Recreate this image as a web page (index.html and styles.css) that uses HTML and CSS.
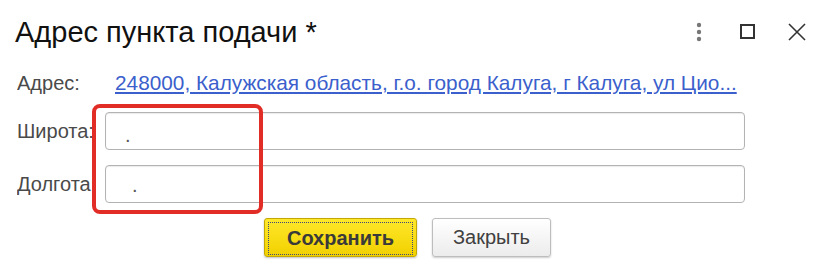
FILE: index.html
```html
<!DOCTYPE html>
<html lang="ru">
<head>
    <meta charset="UTF-8">
    <title>Адрес пункта подачи</title>
    <link rel="stylesheet" href="styles.css">
</head>
<body>

    <div class="dialog">
        <div class="header">
            <h1 class="title">Адрес пункта подачи *</h1>
            <div class="tools">
                <span class="tool more">
                    <svg width="6" height="20" viewBox="0 0 6 20"><circle cx="3" cy="3" r="2.2" fill="#777"/><circle cx="3" cy="10" r="2.2" fill="#777"/><circle cx="3" cy="17" r="2.2" fill="#777"/></svg>
                </span>
                <span class="tool maximize">
                    <svg width="16" height="16" viewBox="0 0 16 16"><rect x="1" y="1" width="13" height="13" fill="none" stroke="#333" stroke-width="2"/></svg>
                </span>
                <span class="tool close">
                    <svg width="18" height="18" viewBox="0 0 18 18"><path d="M1 1 L17 17 M17 1 L1 17" stroke="#333" stroke-width="1.6" fill="none"/></svg>
                </span>
            </div>
        </div>

        <div class="form">
            <div class="row address-row">
                <span class="label">Адрес:</span>
                <a class="address-link" href="#">248000, Калужская область, г.о. город Калуга, г Калуга, ул Цио...</a>
            </div>
            <div class="row">
                <span class="label">Широта:</span>
                <div class="field"><span class="mask">.</span></div>
            </div>
            <div class="row">
                <span class="label">Долгота:</span>
                <div class="field"><span class="mask second">.</span></div>
            </div>

            <!-- пометка на скриншоте -->
            <div class="highlight"></div>
        </div>

        <div class="buttons">
            <button class="btn btn-save"><span>Сохранить</span></button>
            <button class="btn btn-close">Закрыть</button>
        </div>
    </div>

</body>
</html>
```

FILE: styles.css
```css
body {
    margin: 0;
    background-color: #fff;
    font-family: "Liberation Sans", Arial, sans-serif;
}

.dialog {
    width: 825px;
    height: 277px;
    overflow: hidden;
}

.header {
    display: flex;
    align-items: center;
    justify-content: space-between;
    height: 48px;
    padding-top: 8px;
}

.title {
    margin: 0 0 0 15px;
    font-size: 29px;
    font-weight: normal;
    color: #111;
}

.tools {
    display: flex;
    align-items: center;
    margin-right: 19px;
}

.tool {
    display: flex;
    align-items: center;
}

.more {
    margin-right: 38px;
}

.maximize {
    margin-right: 32px;
}

.form {
    position: relative;
    padding: 4px 0 0 17px;
}

.row {
    display: flex;
    align-items: center;
}

.label {
    width: 88px;
    flex: none;
    font-size: 20px;
    color: #4a4a4a;
    white-space: nowrap;
    overflow: hidden;
}

.address-row {
    height: 46px;
}

.address-link {
    margin-left: 10px;
    font-size: 20.8px;
    color: #3b5fcc;
    text-decoration: underline;
    white-space: nowrap;
}

.row + .row {
    margin-top: 15px;
}

.address-row + .row {
    margin-top: 6px;
}

.field {
    position: relative;
    width: 638px;
    height: 36px;
    border: 1px solid #b3b3b3;
    border-radius: 4px;
    box-shadow: inset 0 1px 1px rgba(0, 0, 0, 0.08);
    background-color: #fff;
}

.mask {
    position: absolute;
    left: 19px;
    top: 11px;
    font-size: 20px;
    color: #555;
}

.mask.second {
    left: 26px;
    top: 8px;
}

.highlight {
    position: absolute;
    left: 92px;
    top: 48px;
    width: 163px;
    height: 102px;
    border: 4px solid #e22d27;
    border-radius: 8px;
}

.buttons {
    display: flex;
    margin-top: 15px;
    margin-left: 264px;
}

.btn {
    height: 39px;
    font-family: "Liberation Sans", Arial, sans-serif;
    font-size: 20px;
    color: #404040;
    border-radius: 3px;
    cursor: pointer;
}

.btn-save {
    width: 153px;
    padding: 3px;
    border: 1px solid #c4a800;
    background: linear-gradient(#ffe82a, #f1d000);
    box-shadow: 0 1px 2px rgba(0, 0, 0, 0.25);
    font-weight: bold;
    color: #3a3a3a;
}

.btn-save span {
    display: flex;
    align-items: center;
    justify-content: center;
    height: 100%;
    border: 1px dotted #3d4a7a;
}

.btn-close {
    width: 119px;
    margin-left: 15px;
    border: 1px solid #bdbdbd;
    background: linear-gradient(#ffffff, #ececec);
    box-shadow: 0 1px 2px rgba(0, 0, 0, 0.2);
}
```
